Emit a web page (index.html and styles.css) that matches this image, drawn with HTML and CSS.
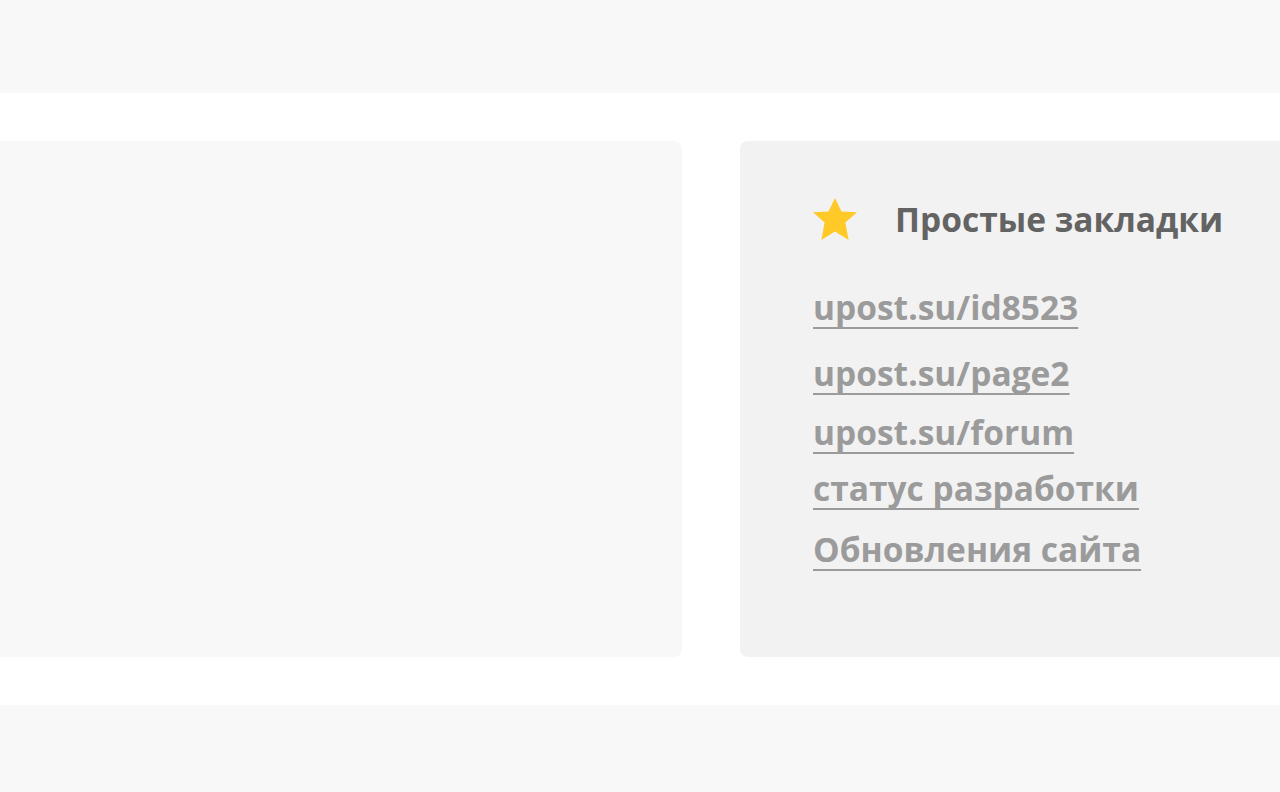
FILE: index.html
```html
<!DOCTYPE html>
<html lang="ru">
<head>
  <meta charset="UTF-8" />
  <meta name="viewport" content="width=device-width,initial-scale=1.0" />
  <title>Закладки</title>
  <link rel="stylesheet" href="styles.css">
</head>
<body>

  <header class="topbar"></header>

  <main class="cards">
    <section class="card card-main"></section>

    <aside class="card card-side">
      <div class="side-head">
        <svg class="star" viewBox="0 0 44 42" width="44" height="42" aria-hidden="true">
          <polygon points="22,0 28.5,13.5 44,14.3 32.4,24.6 35.6,42 22,33.5 8.4,42 11.6,24.6 0,14.3 15.5,13.5" fill="#ffca28"/>
        </svg>
        <h2>Простые закладки</h2>
      </div>
      <ul class="bookmarks">
        <li class="b1"><a href="#">upost.su/id8523</a></li>
        <li class="b2"><a href="#">upost.su/page2</a></li>
        <li class="b3"><a href="#">upost.su/forum</a></li>
        <li class="b4"><a href="#">статус разработки</a></li>
        <li class="b5"><a href="#">Обновления сайта</a></li>
      </ul>
    </aside>
  </main>

  <footer class="bottombar"></footer>

</body>
</html>
```

FILE: styles.css
```css
* { margin: 0; padding: 0; box-sizing: border-box; }
html, body { height: 100%; }
body {
  font-family: "Open Sans", "Noto Sans", sans-serif;
  background: #fff;
  color: #333;
  overflow: hidden;
}
.topbar { height: 93px; background: #f8f8f8; }
.bottombar { height: 100px; background: #f8f8f8; }

.cards {
  display: flex;
  gap: 58px;
  padding: 48px 0;
  margin-left: -20px;
  width: 1320px;
}
.card {
  height: 516px;
  border-radius: 8px;
}
.card-main { width: 702px; background: #f8f8f8; }
.card-side {
  flex: 1;
  background: #f2f2f2;
  padding: 56px 0 0 73px;
}

.side-head {
  display: flex;
  align-items: center;
  gap: 38px;
  height: 44px;
}
.star { display: block; flex: none; }
.side-head h2 {
  font-size: 33.5px;
  font-weight: 700;
  color: #636363;
  line-height: 44px;
}

/* each row has its own spacing */
.bookmarks { list-style: none; margin-top: 46px; }
.bookmarks li {
  font-size: 33.5px;
  line-height: 40px;
}
.bookmarks a {
  font-weight: 700;
  color: #9b9b9b;
  text-decoration: underline;
  text-decoration-thickness: 2px;
  text-underline-offset: 7px;
  text-decoration-skip-ink: none;
}
.bookmarks .b2 { margin-top: 26px; }
.bookmarks .b3 { margin-top: 19px; }
.bookmarks .b4 { margin-top: 16px; }
.bookmarks .b5 { margin-top: 21px; }
```
